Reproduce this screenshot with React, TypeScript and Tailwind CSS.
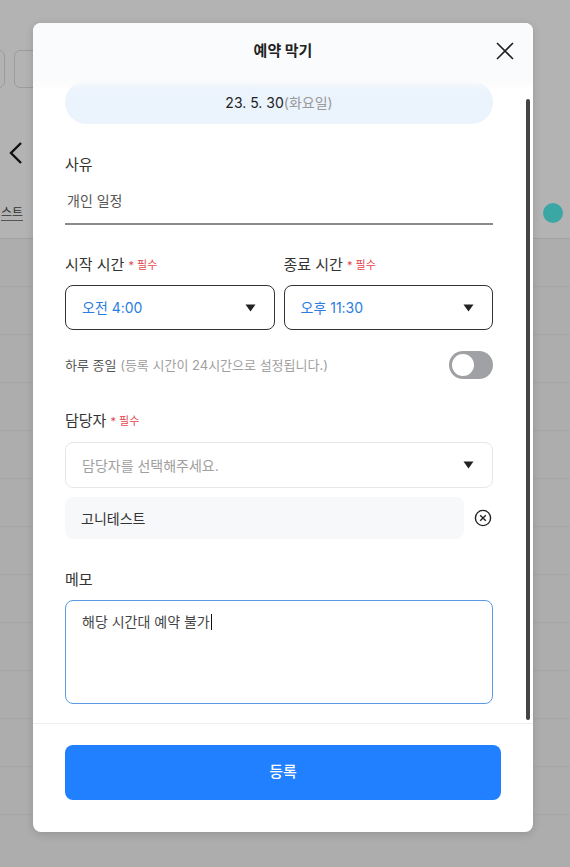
import React from "react";

const Caret = () => (
  <svg width="11" height="8" viewBox="0 0 11 8" className="shrink-0">
    <path d="M0.5 0.5 H10.5 L5.5 7.5 Z" fill="#222" />
  </svg>
);

const Req = () => (
  <span className="ml-1 text-[11px] text-[#e5484d]">* 필수</span>
);

export default function App() {
  return (
    <div
      className="relative h-[867px] w-[570px] overflow-hidden bg-[#adadad]"
      style={{ fontFamily: 'Inter, "Noto Sans CJK KR", sans-serif' }}
    >
      {/* dimmed page behind */}
      <div className="flex h-[239px] flex-col border-b border-[#a2a2a2] bg-[#b3b3b3]">
        <div className="mt-[50px] flex gap-[9px] pl-0">
          <div className="-ml-[30px] h-[38px] w-[35px] rounded-md border border-[#9c9c9c]" />
          <div className="h-[38px] w-[40px] rounded-md border border-[#9c9c9c]" />
        </div>
        <div className="mt-[53px] flex items-center pl-[9px]">
          <svg width="14" height="24" viewBox="0 0 14 24">
            <path d="M12 2 L2 12 L12 22" stroke="#111" strokeWidth="2.4" fill="none" />
          </svg>
        </div>
        <div className="mt-[38px] flex items-center justify-between">
          <span className="ml-[1px] border-b border-[#555] text-[12px] leading-[15px] text-[#333]">스트</span>
          <div className="mr-[7px] h-[20px] w-[20px] rounded-full bg-[#3ba7a4]" />
        </div>
      </div>
      <div className="flex flex-col">
        {Array.from({ length: 12 }).map((_, i) => (
          <div key={i} className="h-[48px] border-b border-[#a6a6a6]" />
        ))}
      </div>

      {/* modal */}
      <div className="absolute left-[33px] top-[23px] flex h-[809px] w-[500px] flex-col overflow-hidden rounded-[8px] bg-white shadow-[0_2px_8px_rgba(0,0,0,0.15)]">
        <div className="relative z-10 flex h-[57px] shrink-0 items-center justify-center bg-[#fafbfc]">
          <span className="text-[15px] font-bold text-[#222]">예약 막기</span>
          <svg
            className="absolute right-[19px] top-[19px]"
            width="18"
            height="18"
            viewBox="0 0 18 18"
          >
            <path d="M1 1 L17 17 M17 1 L1 17" stroke="#222" strokeWidth="1.6" />
          </svg>
          <div className="absolute left-0 right-0 top-[57px] h-[10px] bg-gradient-to-b from-[#fafbfc] to-transparent" />
        </div>

        <div className="flex min-h-0 flex-1">
          <div className="flex flex-1 flex-col pl-[32px] pr-[32px]">
            <div className="mt-[1px] flex h-[43px] shrink-0 items-center justify-center rounded-full bg-[#ebf3fd] text-[14px]">
              <span className="text-[#222]">23. 5. 30</span>
              <span className="text-[#999]">(화요일)</span>
            </div>

            <div className="mt-[30px] text-[15px] leading-[22px] text-[#333]">사유</div>
            <div className="mt-[15px] border-b-2 border-[#8a8a8a] pb-[12px] pl-[2px] text-[14px] leading-[20px] text-[#555]">
              개인 일정
            </div>

            <div className="mt-[29px] grid grid-cols-2 gap-[9px]">
              <div className="flex flex-col">
                <div className="flex items-center text-[15px] leading-[22px] text-[#333]">
                  시작 시간<Req />
                </div>
                <div className="mt-[9px] flex h-[45px] items-center justify-between rounded-[8px] border border-[#333] pl-[16px] pr-[18px]">
                  <span className="text-[14px] text-[#2b7de0]">오전 4:00</span>
                  <Caret />
                </div>
              </div>
              <div className="flex flex-col">
                <div className="flex items-center text-[15px] leading-[22px] text-[#333]">
                  종료 시간<Req />
                </div>
                <div className="mt-[9px] flex h-[45px] items-center justify-between rounded-[8px] border border-[#333] pl-[16px] pr-[18px]">
                  <span className="text-[14px] text-[#2b7de0]">오후 11:30</span>
                  <Caret />
                </div>
              </div>
            </div>

            <div className="mt-[21px] flex items-center justify-between">
              <div className="text-[13px] leading-[20px]">
                <span className="text-[#555]">하루 종일 </span>
                <span className="text-[#a0a0a0]">(등록 시간이 24시간으로 설정됩니다.)</span>
              </div>
              <div className="flex h-[28px] w-[44px] items-center rounded-full bg-[#a0a1a5] pl-[3px]">
                <div className="h-[22px] w-[22px] rounded-full bg-white" />
              </div>
            </div>

            <div className="mt-[31px] flex items-center text-[15px] leading-[22px] text-[#333]">
              담당자<Req />
            </div>
            <div className="mt-[10px] flex h-[46px] shrink-0 items-center justify-between rounded-[8px] border border-[#e6e6e6] pl-[16px] pr-[18px]">
              <span className="text-[14px] text-[#a0a0a0]">담당자를 선택해주세요.</span>
              <Caret />
            </div>

            <div className="mt-[9px] flex items-center gap-[10px]">
              <div className="flex h-[42px] flex-1 items-center rounded-[8px] bg-[#f7f8fa] pl-[16px] text-[14px] text-[#333]">
                고니테스트
              </div>
              <svg width="18" height="18" viewBox="0 0 18 18" className="mr-[1px]">
                <circle cx="9" cy="9" r="7.6" stroke="#222" strokeWidth="1.4" fill="none" />
                <path d="M6.2 6.2 L11.8 11.8 M11.8 6.2 L6.2 11.8" stroke="#222" strokeWidth="1.4" />
              </svg>
            </div>

            <div className="mt-[30px] text-[15px] leading-[22px] text-[#333]">메모</div>
            <div className="mt-[9px] h-[104px] shrink-0 rounded-[8px] border border-[#5b9be6] pl-[16px] pt-[10px] text-[14px] leading-[22px] text-[#444]">
              해당 시간대 예약 불가<span className="ml-[1px] inline-block h-[16px] w-px translate-y-[3px] bg-[#111]" />
            </div>
          </div>
          <div className="flex w-[8px] shrink-0 flex-col pt-[19px] pb-[3px]">
            <div className="ml-[1px] h-[621px] w-[4px] rounded-full bg-[#444]" />
          </div>
        </div>

        <div className="flex h-[109px] shrink-0 flex-col border-t border-[#ededed] px-[32px] pt-[21px]">
          <div className="flex h-[55px] items-center justify-center rounded-[8px] bg-[#2180ff] text-[15px] font-medium text-white">
            등록
          </div>
        </div>
      </div>
    </div>
  );
}
